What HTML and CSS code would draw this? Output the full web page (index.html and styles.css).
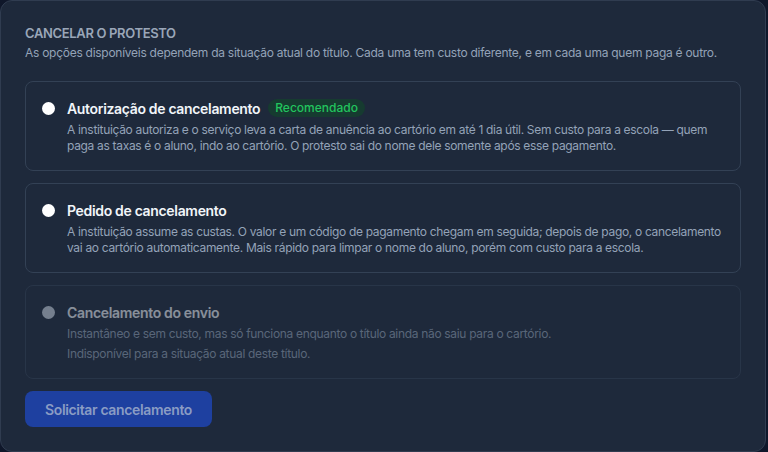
FILE: index.html
```html
<!DOCTYPE html>
<html lang="pt-BR">
<head>
    <meta charset="UTF-8">
    <meta name="viewport" content="width=device-width, initial-scale=1.0">
    <title>Cancelar o protesto</title>
    <link rel="stylesheet" href="styles.css">
</head>
<body>
    <!-- Painel de cancelamento -->
    <div class="panel">
        <h2 class="panel-title">Cancelar o protesto</h2>
        <p class="panel-sub">As opções disponíveis dependem da situação atual do título. Cada uma tem custo diferente, e em cada uma quem paga é outro.</p>

        <div class="options">
            <label class="option">
                <span class="radio"></span>
                <div class="option-body">
                    <div class="option-head">
                        <span class="option-title">Autorização de cancelamento</span>
                        <span class="badge">Recomendado</span>
                    </div>
                    <p class="option-desc">A instituição autoriza e o serviço leva a carta de anuência ao cartório em até 1 dia útil. Sem custo para a escola — quem paga as taxas é o aluno, indo ao cartório. O protesto sai do nome dele somente após esse pagamento.</p>
                </div>
            </label>

            <label class="option">
                <span class="radio"></span>
                <div class="option-body">
                    <div class="option-head">
                        <span class="option-title">Pedido de cancelamento</span>
                    </div>
                    <p class="option-desc">A instituição assume as custas. O valor e um código de pagamento chegam em seguida; depois de pago, o cancelamento vai ao cartório automaticamente. Mais rápido para limpar o nome do aluno, porém com custo para a escola.</p>
                </div>
            </label>

            <label class="option disabled">
                <span class="radio"></span>
                <div class="option-body">
                    <div class="option-head">
                        <span class="option-title">Cancelamento do envio</span>
                    </div>
                    <p class="option-desc">Instantâneo e sem custo, mas só funciona enquanto o título ainda não saiu para o cartório.</p>
                    <p class="option-note">Indisponível para a situação atual deste título.</p>
                </div>
            </label>
        </div>

        <button class="btn-submit" disabled>Solicitar cancelamento</button>
    </div>
</body>
</html>
```

FILE: styles.css
```css
/* Base */
body {
    margin: 0;
    background-color: #0f172a;
    font-family: Inter, "Noto Sans", sans-serif;
}

/* Painel */
.panel {
    box-sizing: border-box;
    width: 766px;
    height: 452px;
    padding: 23px 24px;
    background-color: #1e293b;
    border: 1px solid #303c50;
    border-radius: 12px;
}

.panel-title {
    margin: 0;
    font-size: 13px;
    line-height: 18px;
    font-weight: 600;
    letter-spacing: -0.35px;
    text-transform: uppercase;
    color: #9aa6b8;
}

.panel-sub {
    margin: 2px 0 19px;
    font-size: 12px;
    line-height: 18px;
    letter-spacing: -0.27px;
    color: #94a3b8;
}

/* Opcoes */
.options {
    display: flex;
    flex-direction: column;
    gap: 12px;
}

.option {
    display: flex;
    gap: 12px;
    padding: 16px;
    border: 1px solid #334155;
    border-radius: 8px;
    cursor: pointer;
}

.radio {
    flex: none;
    width: 13px;
    height: 13px;
    margin-top: 4px;
    border-radius: 50%;
    background-color: #ffffff;
}

.option-head {
    display: flex;
    align-items: center;
    gap: 8px;
    height: 20px;
}

.option-title {
    font-size: 14px;
    font-weight: 600;
    letter-spacing: -0.33px;
    color: #f1f5f9;
}

.badge {
    padding: 1px 7px;
    font-size: 12px;
    line-height: 16px;
    font-weight: 500;
    color: #22c55e;
    background-color: #163b30;
    border-radius: 9px;
}

.option-desc,
.option-note {
    margin: 4px 0 0;
    font-size: 12px;
    line-height: 16px;
    letter-spacing: -0.32px;
    color: #94a3b8;
}

.option.disabled {
    opacity: 0.5;
    cursor: not-allowed;
}

.option.disabled .radio {
    background-color: #cbd5e1;
}

/* Botao */
.btn-submit {
    margin-top: 12px;
    height: 36px;
    padding: 0 20px;
    font-family: inherit;
    font-size: 14px;
    font-weight: 600;
    letter-spacing: -0.35px;
    color: #8a9cc4;
    background-color: #1e40a0;
    border: none;
    border-radius: 8px;
    cursor: not-allowed;
}
```
